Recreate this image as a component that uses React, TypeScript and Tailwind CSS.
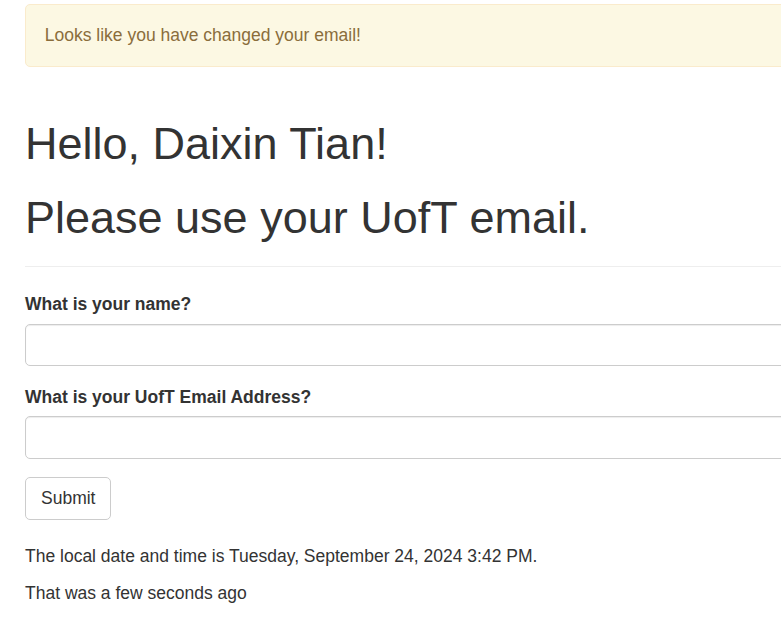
export default function App() {
  return (
    <div className="min-h-screen overflow-hidden bg-white pt-[4px] pl-[25px] text-[17.5px] leading-[25px] text-[#333] [font-family:'Liberation_Sans',Arial,sans-serif]">
      <div className="w-[1000px]">
        {/* Flash message */}
        <div className="rounded-[5px] border border-[#faebcc] bg-[#fcf8e3] px-[18.75px] py-[17.75px] text-[#8a6d3b]">
          Looks like you have changed your email!
        </div>

        {/* Page header */}
        <div className="mt-[52px] mb-[25px] border-b border-[#eee] pb-[11.25px]">
          <h1 className="text-[45px] leading-[49.5px] font-medium">Hello, Daixin Tian!</h1>
          <h1 className="mt-[25px] mb-[12.5px] text-[45px] leading-[49.5px] font-medium">
            Please use your UofT email.
          </h1>
        </div>

        {/* Form */}
        <form onSubmit={(e) => e.preventDefault()}>
          <div className="mb-[18.75px]">
            <label className="mb-[6.25px] block font-bold">What is your name?</label>
            <input
              type="text"
              className="block h-[42.5px] w-full rounded-[5px] border border-[#ccc] px-[15px] shadow-[inset_0_1px_1px_rgba(0,0,0,0.075)] outline-none"
            />
          </div>
          <div className="mb-[18.75px]">
            <label className="mb-[6.25px] block font-bold">What is your UofT Email Address?</label>
            <input
              type="text"
              className="block h-[42.5px] w-full rounded-[5px] border border-[#ccc] px-[15px] shadow-[inset_0_1px_1px_rgba(0,0,0,0.075)] outline-none"
            />
          </div>
          <button
            type="submit"
            className="h-[42.5px] rounded-[5px] border border-[#ccc] bg-white px-[15px] text-[#333]"
          >
            Submit
          </button>
        </form>

        <p className="mt-[24px] mb-[12.5px]">
          The local date and time is Tuesday, September 24, 2024 3:42 PM.
        </p>
        <p className="mb-[12.5px]">That was a few seconds ago</p>
      </div>
    </div>
  );
}
